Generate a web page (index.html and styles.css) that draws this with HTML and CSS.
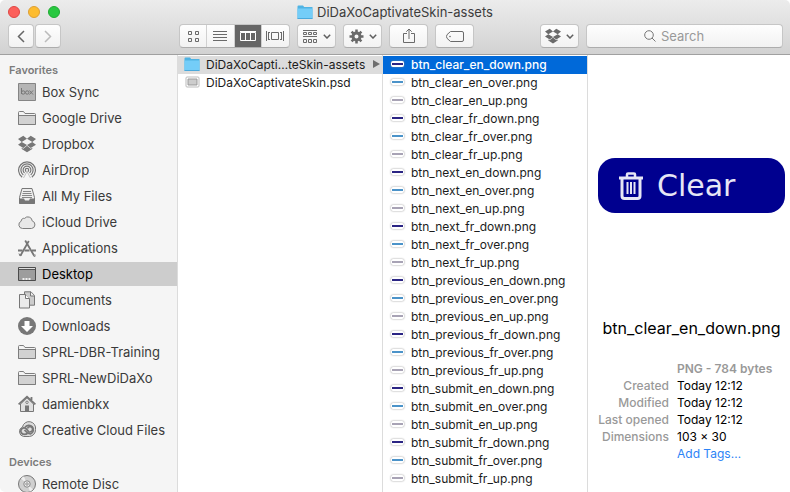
FILE: index.html
```html
<!DOCTYPE html>
<html lang="en">
<head>
    <meta charset="UTF-8">
    <meta name="viewport" content="width=device-width, initial-scale=1.0">
    <title>DiDaXoCaptivateSkin-assets</title>
    <link rel="stylesheet" href="styles.css">
</head>
<body>

    <!-- shared icons -->
    <svg class="sprite" aria-hidden="true">
        <symbol id="folder-blue" viewBox="0 0 16 14">
            <path d="M.5 1.500q0-1 1-1H6l1.200 1.500h8.300V13.500H.5z" fill="#4fb3e3"/>
            <path d="M.5 3.500h15v10H.5z" fill="#74cdf8"/>
            <path d="M.5 13.500h15" stroke="#4aa9dc"/>
        </symbol>
        <symbol id="folder" viewBox="0 0 18 18">
            <path d="M.5 15.500v-12q0-1 1-1h4l1.500 2h9.500q1 0 1 1v10z" fill="#f4f4f4" stroke="#7d7d7d"/>
            <path d="M1 6.500h16v8.500H1z" fill="#d2d2d2"/>
            <path d="M.5 6.500h17M.5 15.500h17" stroke="#7d7d7d"/>
        </symbol>
        <symbol id="dropbox" viewBox="0 0 18 18">
            <path fill="currentColor" d="M5.300.8 9 3.800 3.700 6.900 0 4zM12.700.8 9 3.800l5.300 3.100L18 4zM0 9.700l3.700-2.800L9 10l-3.700 3zM18 9.700l-3.700-2.800L9 10l3.700 3zM5.300 13.800 9 10.800l3.700 3 1.600-1v1.300L9 17.300l-5.300-3.200v-1.300z"/>
        </symbol>
        <symbol id="chevron" viewBox="0 0 8 5">
            <path d="M.8.8 4 4 7.200.8" fill="none" stroke="#5f5f5f" stroke-width="1.500"/>
        </symbol>
    </svg>

    <div class="window">
        <header class="header">
            <div class="title-row">
                <div class="lights">
                    <button class="light close" aria-label="Close"></button>
                    <button class="light minimize" aria-label="Minimize"></button>
                    <button class="light expand" aria-label="Zoom"></button>
                </div>
                <h1 class="title"><svg width="16" height="14"><use href="#folder-blue"/></svg>DiDaXoCaptivateSkin-assets</h1>
            </div>

            <div class="toolbar">
                <div class="nav">
                    <button class="tool arrow" aria-label="Back"><svg width="8" height="13" viewBox="0 0 8 13"><path d="M7 1 1.500 6.500 7 12" fill="none" stroke="#666" stroke-width="1.500"/></svg></button>
                    <button class="tool arrow" aria-label="Forward" disabled><svg width="8" height="13" viewBox="0 0 8 13"><path d="M1 1l5.500 5.500L1 12" fill="none" stroke="#bbb" stroke-width="1.500"/></svg></button>
                </div>
                <div class="spacer wide"></div>

                <div class="views">
                    <button class="view" aria-label="Icons"><svg width="11" height="11" viewBox="0 0 11 11"><path d="M.5.5h3v3h-3zM7.500.5h3v3h-3zM.5 7.500h3v3h-3zM7.500 7.500h3v3h-3z" fill="none" stroke="#6a6a6a"/></svg></button>
                    <button class="view" aria-label="List"><svg width="14" height="10" viewBox="0 0 14 10"><path d="M0 .5h14M0 3.500h14M0 6.500h14M0 9.500h14" stroke="#6a6a6a"/></svg></button>
                    <button class="view active" aria-label="Columns"><svg width="16" height="11" viewBox="0 0 16 11"><path d="M.5 1.500h15v8H.5zM5.500 1v9M10.500 1v9" fill="none" stroke="#fff"/><path d="M0 .5h16" stroke="#fff"/></svg></button>
                    <button class="view" aria-label="Cover Flow"><svg width="18" height="10" viewBox="0 0 18 10"><path d="M5.500 1.500h7v7h-7zM.5 0v10M2.500 1v8M2.500 1.500h1.500M2.500 8.500h1.500M17.500 0v10M15.500 1v8M15.500 1.500h-1.500M15.500 8.500h-1.500" fill="none" stroke="#6a6a6a"/></svg></button>
                </div>
                <button class="tool menu" aria-label="Arrange">
                    <svg width="15" height="13" viewBox="0 0 15 13"><path d="M0 .5h14M0 6.500h14M.5 2.500h3v2h-3zM5.500 2.500h3v2h-3zM10.500 2.500h3v2h-3zM.5 9.500h3v3h-3zM5.500 9.500h3v3h-3zM10.500 9.500h3v3h-3z" fill="none" stroke="#6a6a6a"/></svg>
                    <svg width="8" height="5"><use href="#chevron"/></svg>
                </button>
                <button class="tool menu" aria-label="Action">
                    <svg width="15" height="15" viewBox="0 0 15 15"><g stroke="#6a6a6a"><path d="M7.500.5v3M7.500 11.500v3M.5 7.500h3M11.500 7.500h3M2.600 2.600l2 2M10.400 10.400l2 2M2.600 12.400l2-2M10.400 4.600l2-2" stroke-width="2.500"/><circle cx="7.500" cy="7.500" r="3.500" fill="none" stroke-width="3"/></g></svg>
                    <svg width="8" height="5"><use href="#chevron"/></svg>
                </button>
                <button class="tool menu" aria-label="Share"><svg width="12" height="16" viewBox="0 0 12 16"><path d="M4 5.500H.5v9h11v-9H8M6 11V1M3.300 3.700 6 1l2.700 2.700" fill="none" stroke="#6a6a6a"/></svg></button>
                <button class="tool menu" aria-label="Tags"><svg width="18" height="11" viewBox="0 0 18 11"><path d="M4.500.5H16q1.500 0 1.500 1.500v7q0 1.500-1.500 1.500H4.500L1 7.300Q0 5.500 1 3.700z" fill="none" stroke="#6a6a6a"/><circle cx="4" cy="5.500" r=".8" fill="#6a6a6a"/></svg></button>
                <div class="spacer"></div>
                <button class="tool menu" aria-label="Dropbox">
                    <svg class="gray" width="16" height="16"><use href="#dropbox"/></svg>
                    <svg width="8" height="5"><use href="#chevron"/></svg>
                </button>
                <label class="search">
                    <svg width="12" height="12" viewBox="0 0 12 12"><path d="M8 8l3.500 3.500" stroke="#777"/><circle cx="5" cy="5" r="4.300" fill="none" stroke="#777"/></svg>
                    <input type="text" placeholder="Search" aria-label="Search">
                </label>
            </div>
        </header>

        <main class="content">
            <nav class="sidebar">
                <h2>Favorites</h2>
                <a class="place" href="#"><svg viewBox="0 0 18 18"><path d="M.5.5h17v17H.5z" fill="#b5b5b5" stroke="#858585"/><g fill="none" stroke="#777"><path d="M3.500 5v6"/><circle cx="5.200" cy="9.500" r="1.700"/><circle cx="9.200" cy="9.500" r="1.700"/><path d="M11.500 7.500l3.500 4M15 7.500l-3.500 4"/></g></svg>Box Sync</a>
                <a class="place" href="#"><svg><use href="#folder"/></svg>Google Drive</a>
                <a class="place" href="#"><svg><use href="#dropbox"/></svg>Dropbox</a>
                <a class="place" href="#"><svg viewBox="0 0 18 18"><g fill="none" stroke="#777" stroke-width="1.200"><path d="M4.200 16.200A8.400 8.400 0 1 1 13.800 16.200"/><path d="M5.300 13.900A6.100 6.100 0 1 1 12.700 13.900"/><path d="M6.500 12A3.900 3.900 0 1 1 11.500 12"/><circle cx="9" cy="9" r="1.700"/></g><path d="M9 9.500 3.500 18h11z" fill="#f5f5f5"/><path d="M9 10.500 5.500 17M9 10.500l3.500 6.500" stroke="#aaa" stroke-width=".7"/></svg>AirDrop</a>
                <a class="place" href="#"><svg viewBox="0 0 18 18"><path d="M4 1.500h10l2.500 9v6h-15v-6z" fill="#eee" stroke="#777"/><path d="M5 4.500h8M4.500 6.500h9M4 8.500h10M4 10.500h10" stroke="#888"/><path d="M1.500 11.500H6l1 2h4l1-2h4.500v5.500h-15z" fill="#777"/></svg>All My Files</a>
                <a class="place" href="#"><svg viewBox="0 0 18 18"><path d="M4.500 15.500a3.800 3.800 0 0 1-1.300-7.300 2.700 2.700 0 0 1 3.400-2.800 4.300 4.300 0 0 1 7.600 2.500 3.900 3.900 0 0 1-.7 7.600z" fill="#e8e8e8" stroke="#7d7d7d"/></svg>iCloud Drive</a>
                <a class="place" href="#"><svg viewBox="0 0 18 18"><g fill="none" stroke="#777" stroke-width="1.800"><path d="M7.200 1.500 16 16.500M10.800 2 2.500 16.500"/><path d="M0 11.500h4.500M6.500 11.500h5M14 11.500h4" stroke-width="2"/></g><path d="M1 14.500l1 2.500 2-1.500M17 15.500v2l-2-1" stroke="#777" fill="none"/></svg>Applications</a>
                <a class="place selected" href="#"><svg viewBox="0 0 18 18"><path d="M.5 2.500h17v13H.5z" fill="#9d9d9d" stroke="#4c4c4c"/><path d="M1 3.500h16" stroke="#ddd"/><path d="M1 4.500h16" stroke="#555"/><path d="M4.500 14h2M7.500 14h2M10.500 14h2" stroke="#eee" stroke-width="2"/></svg>Desktop</a>
                <a class="place" href="#"><svg viewBox="0 0 18 18"><path d="M6.500.8H13l3.500 3.700v9.700h-10z" fill="#ccc" stroke="#777"/><path d="M12.500 1v4h4" fill="#eee" stroke="#777"/><path d="M1.500 3.500h6l4 4v9.500h-10z" fill="#eaeaea" stroke="#777"/><path d="M7.500 3.500v4h4" fill="#fff" stroke="#777"/></svg>Documents</a>
                <a class="place" href="#"><svg viewBox="0 0 18 18"><circle cx="9" cy="9" r="9" fill="#777"/><path d="M6.500 4h5v5H15l-6 6-6-6h3.500z" fill="#fff"/></svg>Downloads</a>
                <a class="place" href="#"><svg><use href="#folder"/></svg>SPRL-DBR-Training</a>
                <a class="place" href="#"><svg><use href="#folder"/></svg>SPRL-NewDiDaXo</a>
                <a class="place" href="#"><svg viewBox="0 0 18 18"><path d="M2.500 9v7.500h13V9L9 2.800z" fill="#e0e0e0" stroke="#777"/><path d="M.6 9.300 9 1.700l8.400 7.600M13.500 5V2" fill="none" stroke="#777" stroke-width="1.800"/><path d="M7 10.500h4V17H7z" fill="#777"/><circle cx="9" cy="7.300" r="1.200" fill="#fff" stroke="#777"/></svg>damienbkx</a>
                <a class="place" href="#"><svg viewBox="0 0 18 18"><path d="M5.500 15.500a5 5 0 0 1-1-9.500 6.600 6.600 0 0 1 13 2.500 6.600 6.600 0 0 1-6 7z" fill="#ddd" stroke="#777"/><g fill="none" stroke="#777" stroke-width="1.700"><path d="M9.500 12.300Q8.500 13.300 6 13.300a3.200 3.200 0 1 1 2.500-5.200l3 3.700"/><path d="M7 6.500a4.500 4.500 0 1 1 5.500 6.500Q10 13 8 10.500L6.500 9"/><path d="M9.500 7.500a2.600 2.600 0 1 1 2 3.300"/></g></svg>Creative Cloud Files</a>

                <h2 class="devices">Devices</h2>
                <a class="place" href="#"><svg viewBox="0 0 18 18"><circle cx="9" cy="9" r="8.500" fill="#d0d0d0" stroke="#777"/><path d="M9 9 3 3.500A8 8 0 0 1 6 1.600zM9 9l6 5.500a8 8 0 0 1-3 1.900z" fill="#eee"/><circle cx="9" cy="9" r="3.200" fill="#eee" stroke="#888"/><circle cx="9" cy="9" r="1.200" fill="#fff" stroke="#888"/></svg>Remote Disc</a>
            </nav>

            <div class="column">
                <a class="file open" href="#"><svg class="icon" width="16" height="14"><use href="#folder-blue"/></svg>DiDaXoCapti…teSkin-assets<svg class="expander" width="7" height="8" viewBox="0 0 7 8"><path d="M0 0l7 4-7 4z" fill="#6e6e6e"/></svg></a>
                <a class="file" href="#"><svg class="icon" width="16" height="14" viewBox="0 0 16 14"><rect x="2" y="2" width="13" height="10" rx="1" fill="#fff" stroke="#bbb"/><path d="M4 4h9v6H4z" fill="#ccc" stroke="#999"/></svg>DiDaXoCaptivateSkin.psd</a>
            </div>

            <div class="column">
                <a class="file current" href="#"><span class="thumb down"></span>btn_clear_en_down.png</a>
                <a class="file" href="#"><span class="thumb over"></span>btn_clear_en_over.png</a>
                <a class="file" href="#"><span class="thumb up"></span>btn_clear_en_up.png</a>
                <a class="file" href="#"><span class="thumb down"></span>btn_clear_fr_down.png</a>
                <a class="file" href="#"><span class="thumb over"></span>btn_clear_fr_over.png</a>
                <a class="file" href="#"><span class="thumb up"></span>btn_clear_fr_up.png</a>
                <a class="file" href="#"><span class="thumb down"></span>btn_next_en_down.png</a>
                <a class="file" href="#"><span class="thumb over"></span>btn_next_en_over.png</a>
                <a class="file" href="#"><span class="thumb up"></span>btn_next_en_up.png</a>
                <a class="file" href="#"><span class="thumb down"></span>btn_next_fr_down.png</a>
                <a class="file" href="#"><span class="thumb over"></span>btn_next_fr_over.png</a>
                <a class="file" href="#"><span class="thumb up"></span>btn_next_fr_up.png</a>
                <a class="file" href="#"><span class="thumb down"></span>btn_previous_en_down.png</a>
                <a class="file" href="#"><span class="thumb over"></span>btn_previous_en_over.png</a>
                <a class="file" href="#"><span class="thumb up"></span>btn_previous_en_up.png</a>
                <a class="file" href="#"><span class="thumb down"></span>btn_previous_fr_down.png</a>
                <a class="file" href="#"><span class="thumb over"></span>btn_previous_fr_over.png</a>
                <a class="file" href="#"><span class="thumb up"></span>btn_previous_fr_up.png</a>
                <a class="file" href="#"><span class="thumb down"></span>btn_submit_en_down.png</a>
                <a class="file" href="#"><span class="thumb over"></span>btn_submit_en_over.png</a>
                <a class="file" href="#"><span class="thumb up"></span>btn_submit_en_up.png</a>
                <a class="file" href="#"><span class="thumb down"></span>btn_submit_fr_down.png</a>
                <a class="file" href="#"><span class="thumb over"></span>btn_submit_fr_over.png</a>
                <a class="file" href="#"><span class="thumb up"></span>btn_submit_fr_up.png</a>
            </div>

            <section class="preview">
                <div class="picture-area">
                    <div class="picture">
                        <svg width="24" height="28" viewBox="0 0 24 28"><g fill="none" stroke="#e6e6f5"><path d="M0 6h24" stroke-width="3"/><path d="M8 5V2.500Q8 1.500 9 1.500h6q1 0 1 1V5" stroke-width="2.500"/><path d="M3 7v17q0 2.500 2.500 2.500h13Q21 26.500 21 24V7" stroke-width="3"/><path d="M8.500 10v12M12 10v12M15.500 10v12" stroke-width="2"/></g></svg>
                        <span>Clear</span>
                    </div>
                </div>
                <h2 class="filename">btn_clear_en_down.png</h2>
                <dl class="details">
                    <dd class="kind">PNG - 784 bytes</dd>
                    <dt>Created</dt><dd>Today 12:12</dd>
                    <dt>Modified</dt><dd>Today 12:12</dd>
                    <dt>Last opened</dt><dd>Today 12:12</dd>
                    <dt>Dimensions</dt><dd>103 × 30</dd>
                    <dd><a class="add-tags" href="#">Add Tags…</a></dd>
                </dl>
            </section>
        </main>
    </div>

</body>
</html>
```

FILE: styles.css
```css
* {
    margin: 0;
    padding: 0;
    box-sizing: border-box;
}

body {
    background: #fff;
    font-family: Inter, Roboto, sans-serif;
    font-size: 12px;
    color: #1c1c1c;
}

a {
    color: inherit;
    text-decoration: none;
}

svg {
    display: block;
    flex-shrink: 0;
}

.sprite {
    display: none;
}

.window {
    display: flex;
    flex-direction: column;
    height: 100vh;
    border-radius: 5px;
    overflow: hidden;
}

/* title bar and toolbar */
.header {
    background: linear-gradient(#ececec, #d2d2d2);
    border-bottom: 1px solid #a0a0a0;
    padding-bottom: 6px;
}

.title-row {
    display: grid;
    grid-template-columns: 1fr auto 1fr;
    align-items: center;
    height: 24px;
    padding: 0 8px;
}

.lights {
    display: flex;
    gap: 8px;
}

.light {
    width: 12px;
    height: 12px;
    border-radius: 50%;
    border: 1px solid;
}

.close {
    background: #fc605b;
    border-color: #df4744;
}

.minimize {
    background: #fdbc2f;
    border-color: #de9f34;
}

.expand {
    background: #28c840;
    border-color: #1eab32;
}

.title {
    display: flex;
    align-items: center;
    gap: 4px;
    font-size: 13px;
    font-weight: 400;
    color: #3c3c3c;
}

.toolbar {
    display: flex;
    gap: 7px;
    padding: 0 7px 0 8px;
}

.nav {
    display: flex;
    gap: 1px;
}

.spacer {
    flex: 1;
}

.wide {
    flex: 2;
}

.tool, .views, .search {
    height: 24px;
    background: linear-gradient(#fefefe, #f2f2f2);
    border: 1px solid #c6c6c6;
    border-bottom-color: #adadad;
    border-radius: 4px;
}

.tool {
    display: flex;
    align-items: center;
    justify-content: center;
}

.arrow {
    width: 26px;
}

.menu {
    width: 39px;
    gap: 5px;
}

.gray {
    color: #6a6a6a;
}

.views {
    display: grid;
    grid-template-columns: repeat(4, 1fr);
    width: 111px;
    overflow: hidden;
}

.view {
    display: flex;
    align-items: center;
    justify-content: center;
    background: none;
    border: none;
    border-right: 1px solid #d0d0d0;
}

.view:last-child {
    border-right: none;
}

.view.active {
    background: #666;
}

.search {
    display: flex;
    align-items: center;
    justify-content: center;
    gap: 5px;
    flex: 0 1 197px;
}

.search input {
    width: 64px;
    border: none;
    outline: none;
    background: none;
    font-family: inherit;
    font-size: 13px;
}

.search input::placeholder {
    color: #999;
}

/* columns */
.content {
    display: flex;
    flex: 1;
    min-height: 0;
}

.sidebar {
    flex: 0 0 178px;
    padding-top: 5px;
    background: #f5f5f5;
    border-right: 1px solid #dcdcdc;
    overflow: hidden;
}

.sidebar h2 {
    padding-left: 9px;
    font-size: 11px;
    font-weight: 600;
    line-height: 20px;
    color: #7b7b7b;
}

.sidebar .devices {
    margin-top: 10px;
}

.place {
    display: flex;
    align-items: center;
    gap: 6px;
    height: 24px;
    margin-bottom: 2px;
    padding-left: 18px;
    font-size: 13px;
    color: #3a3a3a;
    white-space: nowrap;
}

.place svg {
    width: 18px;
    height: 18px;
    color: #777;
}

.selected {
    background: #cdcdcd;
    color: #000;
}

.column {
    flex: 0 0 205px;
    padding-top: 1px;
    border-right: 1px solid #dcdcdc;
    overflow: hidden;
}

.file {
    display: flex;
    align-items: center;
    height: 18px;
    padding: 0 0 2px 6px;
    white-space: nowrap;
}

.file .icon {
    margin-right: 6px;
}

.open {
    background: #dcdcdc;
}

.expander {
    margin-left: auto;
    margin-right: 2px;
}

.current {
    background: #0069d9;
    color: #fff;
    font-weight: 500;
}

.thumb {
    width: 13px;
    height: 6px;
    margin: 0 7px 0 2px;
    border: 2px solid #fff;
    border-width: 2px 1px;
    border-radius: 2px;
    box-shadow: 0 0 2px #888;
}

.down {
    background: #2b2584;
}

.over {
    background: #4b93c9;
}

.up {
    background: #a8a3b5;
}

/* preview */
.preview {
    flex: 1;
    min-width: 0;
    padding: 0 5px 0 10px;
}

.picture-area {
    display: flex;
    align-items: center;
    height: 261px;
}

.picture {
    display: flex;
    align-items: center;
    gap: 14px;
    width: 100%;
    height: 55px;
    padding-left: 21px;
    border-radius: 17px;
    background: #00008f;
    color: #e6e6f5;
    font-family: "DejaVu Sans", sans-serif;
    font-size: 30px;
}

.filename {
    font-size: 16px;
    font-weight: 400;
    line-height: 24px;
    text-align: center;
    color: #000;
}

.details {
    display: grid;
    grid-template-columns: 71px 1fr;
    column-gap: 8px;
    margin-top: 20px;
    line-height: 17px;
    color: #000;
    white-space: nowrap;
}

.details dt {
    justify-self: end;
    font-weight: 500;
    color: #999;
}

.details dd {
    grid-column: 2;
}

.details .kind {
    font-weight: 600;
    color: #999;
}

.add-tags {
    color: #2c83f6;
}
```
